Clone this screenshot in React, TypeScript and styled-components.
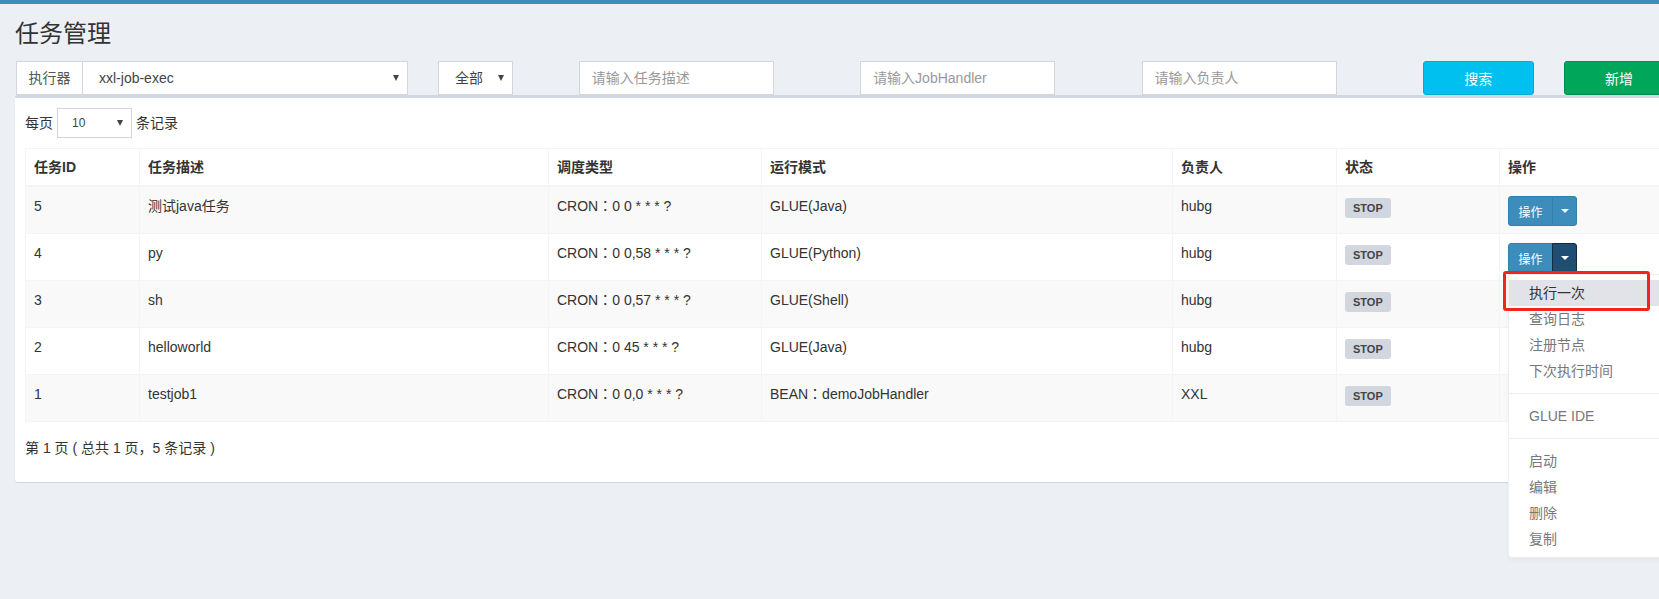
import styled, { createGlobalStyle } from "styled-components";

const GlobalStyle = createGlobalStyle`
  html, body {
    margin: 0;
    padding: 0;
  }
  body {
    background: #ecf0f5;
    font-family: "Liberation Sans", Arial, "Noto Sans CJK SC", sans-serif;
    font-size: 14px;
    line-height: 20px;
    color: #333;
    overflow: hidden;
  }
  * {
    box-sizing: border-box;
  }
`;

const Page = styled.div`
  width: 1704px;
  min-height: 599px;
  border-top: 4px solid #3c8dbc;
`;

const Title = styled.h1`
  margin: 0;
  padding: 15px 15px 0;
  font-size: 24px;
  line-height: 30px;
  font-weight: 400;
  color: #333;
`;

const FilterRow = styled.div`
  margin-top: 12px;
  padding-left: 16px;
  display: grid;
  grid-template-columns: repeat(12, 110.7px);
  column-gap: 30px;
  height: 34px;
`;

const Cell = styled.div<{ $span: number }>`
  grid-column: span ${({ $span }) => $span};
  display: flex;
`;

const Addon = styled.div`
  width: 66px;
  height: 34px;
  display: flex;
  align-items: center;
  justify-content: center;
  background: #fff;
  border: 1px solid #d2d6de;
  border-right: 0;
  color: #555;
`;

const FakeSelect = styled.div<{ $width?: number; $small?: boolean; $pad: number }>`
  flex: ${({ $width }) => ($width ? "none" : "1")};
  width: ${({ $width }) => ($width ? `${$width}px` : "auto")};
  height: ${({ $small }) => ($small ? "30px" : "34px")};
  display: flex;
  align-items: center;
  justify-content: space-between;
  padding: 0 8px 0 ${({ $pad }) => $pad}px;
  background: #fff;
  border: 1px solid #d2d6de;
  color: #444;
  font-size: ${({ $small }) => ($small ? "12px" : "14px")};
`;

const Caret = styled.span`
  width: 0;
  height: 0;
  border-left: 3.5px solid transparent;
  border-right: 3.5px solid transparent;
  border-top: 6px solid #444;
`;

const WhiteCaret = styled.span`
  width: 0;
  height: 0;
  border-left: 4px solid transparent;
  border-right: 4px solid transparent;
  border-top: 4px solid #fff;
`;

const Field = styled.input`
  width: 195px;
  height: 34px;
  padding: 6px 12px;
  border: 1px solid #d2d6de;
  border-radius: 0;
  background: #fff;
  font-family: inherit;
  font-size: 14px;
  color: #555;
  outline: none;
  &::placeholder {
    color: #999;
  }
`;

const ActionButton = styled.button<{ $bg: string; $border: string }>`
  width: 100%;
  height: 34px;
  border-radius: 3px;
  border: 1px solid ${({ $border }) => $border};
  background: ${({ $bg }) => $bg};
  color: #fff;
  font-family: inherit;
  font-size: 14px;
  cursor: pointer;
`;

const Box = styled.div`
  margin-left: 15px;
  width: 1674px;
  background: #fff;
  border-top: 3px solid #d2d6de;
  border-radius: 3px;
  box-shadow: 0 1px 1px rgba(0, 0, 0, 0.1);
`;

const BoxBody = styled.div`
  padding: 10px;
`;

const LengthRow = styled.div`
  display: flex;
  align-items: center;
  gap: 4px;
  height: 30px;
`;

const Table = styled.table`
  margin-top: 10px;
  width: 1654px;
  table-layout: fixed;
  border-collapse: collapse;
  border: 1px solid #f4f4f4;
`;

const Th = styled.th`
  text-align: left;
  font-weight: 700;
  padding: 8px;
  border: 1px solid #f4f4f4;
  border-bottom-width: 2px;
  color: #333;
`;

const Row = styled.tr<{ $striped: boolean }>`
  background: ${({ $striped }) => ($striped ? "#f9f9f9" : "#fff")};
`;

/* cells holding a full-width colon use the JP face, which centres that mark */
const Td = styled.td<{ $centredPunct?: boolean }>`
  padding: 9px 8px 7px;
  border: 1px solid #f4f4f4;
  vertical-align: top;
  height: 46px;
  font-family: ${({ $centredPunct }) =>
    $centredPunct
      ? `"Liberation Sans", Arial, "Noto Sans CJK JP", sans-serif`
      : "inherit"};
`;

const Badge = styled.span`
  display: inline-block;
  margin-top: 2px;
  height: 20px;
  padding: 0 8px;
  line-height: 20px;
  border-radius: 3px;
  background: #d2d6de;
  color: #444;
  font-size: 11px;
  font-weight: 700;
  vertical-align: top;
`;

const BtnGroup = styled.div`
  position: relative;
  display: inline-flex;
`;

const OpButton = styled.button`
  width: 45px;
  height: 30px;
  padding: 0;
  background: #3c8dbc;
  border: 1px solid #367fa9;
  border-radius: 3px 0 0 3px;
  color: #fff;
  font-family: inherit;
  font-size: 12px;
`;

const ToggleButton = styled.button<{ $open: boolean }>`
  width: 25px;
  height: 30px;
  padding: 0;
  display: flex;
  align-items: center;
  justify-content: center;
  margin-left: -1px;
  background: ${({ $open }) => ($open ? "#204d74" : "#3c8dbc")};
  border: 1px solid ${({ $open }) => ($open ? "#122b40" : "#367fa9")};
  border-radius: 0 3px 3px 0;
`;

const Menu = styled.ul`
  position: absolute;
  top: calc(100% + 1px);
  left: 0;
  z-index: 10;
  min-width: 160px;
  margin: 0;
  padding: 5px 0;
  list-style: none;
  background: #fff;
  border: 1px solid #eee;
  border-radius: 0 0 4px 4px;
  box-shadow: 0 2px 4px rgba(0, 0, 0, 0.04);
`;

const MenuItem = styled.li<{ $active?: boolean }>`
  padding: 3px 20px;
  line-height: 20px;
  white-space: nowrap;
  color: ${({ $active }) => ($active ? "#333" : "#777")};
  background: ${({ $active }) => ($active ? "#e1e3e9" : "transparent")};
`;

const Divider = styled.li`
  height: 1px;
  margin: 9px 0;
  background: #eee;
`;

const Highlight = styled.div`
  position: absolute;
  left: -6px;
  top: -4px;
  width: 147px;
  height: 40px;
  border: 3px solid #f5231b;
  border-radius: 3px;
  pointer-events: none;
`;

const Info = styled.div`
  padding: 16px 0 14px;
`;

const columns = [
  { title: "任务ID", width: 114 },
  { title: "任务描述", width: 409 },
  { title: "调度类型", width: 213 },
  { title: "运行模式", width: 411 },
  { title: "负责人", width: 164 },
  { title: "状态", width: 163 },
  { title: "操作", width: 180 },
];

const jobs = [
  { id: 5, desc: "测试java任务", cron: "CRON：0 0 * * * ?", mode: "GLUE(Java)", author: "hubg" },
  { id: 4, desc: "py", cron: "CRON：0 0,58 * * * ?", mode: "GLUE(Python)", author: "hubg" },
  { id: 3, desc: "sh", cron: "CRON：0 0,57 * * * ?", mode: "GLUE(Shell)", author: "hubg" },
  { id: 2, desc: "helloworld", cron: "CRON：0 45 * * * ?", mode: "GLUE(Java)", author: "hubg" },
  { id: 1, desc: "testjob1", cron: "CRON：0 0,0 * * * ?", mode: "BEAN：demoJobHandler", author: "XXL" },
];

function OpsMenu() {
  return (
    <Menu>
      <Highlight />
      <MenuItem $active>执行一次</MenuItem>
      <MenuItem>查询日志</MenuItem>
      <MenuItem>注册节点</MenuItem>
      <MenuItem>下次执行时间</MenuItem>
      <Divider />
      <MenuItem>GLUE IDE</MenuItem>
      <Divider />
      <MenuItem>启动</MenuItem>
      <MenuItem>编辑</MenuItem>
      <MenuItem>删除</MenuItem>
      <MenuItem>复制</MenuItem>
    </Menu>
  );
}

export default function App() {
  return (
    <Page>
      <GlobalStyle />
      <Title>任务管理</Title>

      <FilterRow>
        <Cell $span={3}>
          <Addon>执行器</Addon>
          <FakeSelect $pad={16}>
            <span>xxl-job-exec</span>
            <Caret />
          </FakeSelect>
        </Cell>
        <Cell $span={1}>
          <FakeSelect $width={75} $pad={16}>
            <span>全部</span>
            <Caret />
          </FakeSelect>
        </Cell>
        <Cell $span={2}>
          <Field placeholder="请输入任务描述" />
        </Cell>
        <Cell $span={2}>
          <Field placeholder="请输入JobHandler" />
        </Cell>
        <Cell $span={2}>
          <Field placeholder="请输入负责人" />
        </Cell>
        <Cell $span={1}>
          <ActionButton $bg="#00c0ef" $border="#00acd6">搜索</ActionButton>
        </Cell>
        <Cell $span={1}>
          <ActionButton $bg="#00a65a" $border="#008d4c">新增</ActionButton>
        </Cell>
      </FilterRow>

      <Box>
        <BoxBody>
          <LengthRow>
            <span>每页</span>
            <FakeSelect $width={75} $small $pad={14}>
              <span>10</span>
              <Caret />
            </FakeSelect>
            <span>条记录</span>
          </LengthRow>

          <Table>
            <colgroup>
              {columns.map((c) => (
                <col key={c.title} style={{ width: c.width }} />
              ))}
            </colgroup>
            <thead>
              <tr>
                {columns.map((c) => (
                  <Th key={c.title}>{c.title}</Th>
                ))}
              </tr>
            </thead>
            <tbody>
              {jobs.map((job, i) => (
                <Row key={job.id} $striped={i % 2 === 0}>
                  <Td>{job.id}</Td>
                  <Td>{job.desc}</Td>
                  <Td $centredPunct>{job.cron}</Td>
                  <Td $centredPunct>{job.mode}</Td>
                  <Td>{job.author}</Td>
                  <Td>
                    <Badge>STOP</Badge>
                  </Td>
                  <Td>
                    <BtnGroup>
                      <OpButton>操作</OpButton>
                      <ToggleButton $open={i === 1}>
                        <WhiteCaret />
                      </ToggleButton>
                      {i === 1 && <OpsMenu />}
                    </BtnGroup>
                  </Td>
                </Row>
              ))}
            </tbody>
          </Table>

          <Info>第 1 页 ( 总共 1 页，5 条记录 )</Info>
        </BoxBody>
      </Box>
    </Page>
  );
}
